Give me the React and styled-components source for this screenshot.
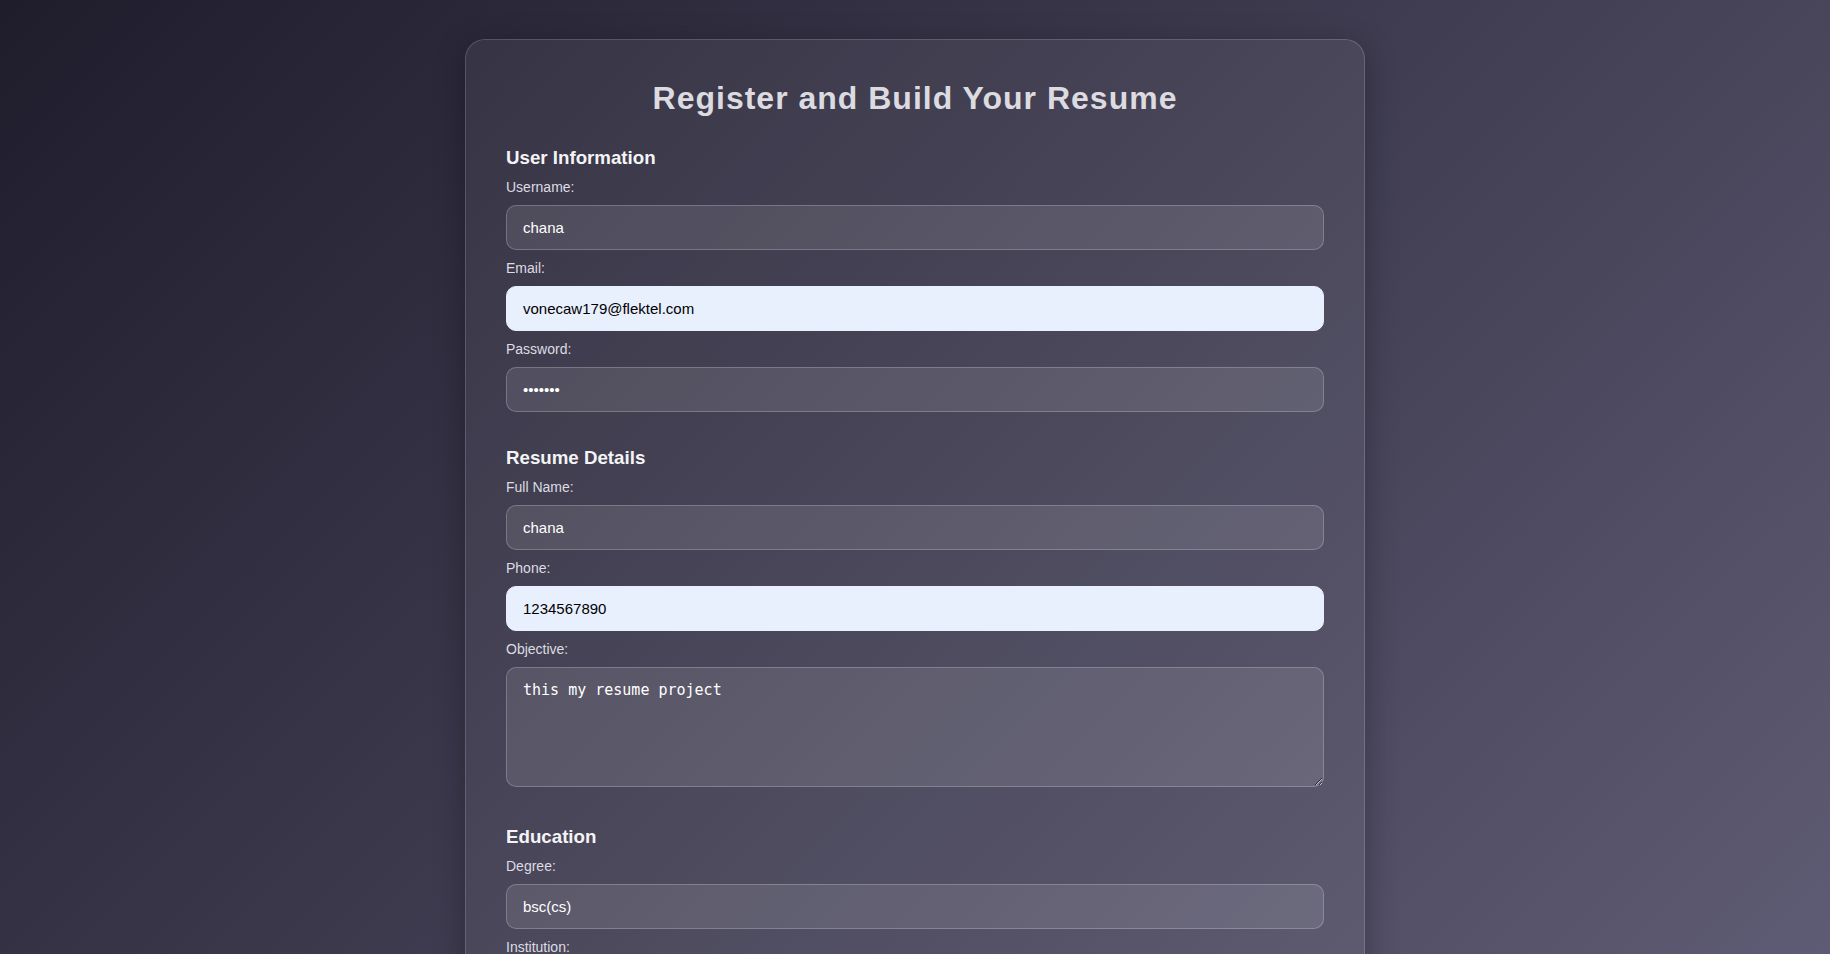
import React, { useState } from 'react'
import styled, { createGlobalStyle } from 'styled-components'

const GlobalStyle = createGlobalStyle`
  * {
    box-sizing: border-box;
  }
  body {
    margin: 0;
    font-family: 'Liberation Sans', Arial, sans-serif;
  }
`

const Page = styled.div`
  min-height: 100vh;
  padding: 39px 0 60px;
  background: linear-gradient(135deg, #1f1c2c 0%, #5e5b74 100%);
  background-attachment: fixed;
`

const Card = styled.form`
  width: 900px;
  margin: 0 auto;
  padding: 40px;
  border-radius: 20px;
  border: 1px solid rgba(255, 255, 255, 0.16);
  background: rgba(255, 255, 255, 0.06);
  box-shadow: 0 8px 32px rgba(0, 0, 0, 0.3);
  color: #f2f2f4;
`

const Title = styled.h1`
  margin: 0 0 30px;
  font-size: 32px;
  font-weight: 700;
  letter-spacing: 1px;
  text-align: center;
  color: #dcdbe0;
`

// padding rather than margin so the last field's margin doesn't collapse into it
const Section = styled.section`
  padding-bottom: 25px;
`

const SectionTitle = styled.h3`
  margin: 0 0 10px;
  font-size: 18.72px;
  font-weight: 700;
  color: #f4f4f6;
`

const Label = styled.label`
  display: block;
  margin-bottom: 10px;
  font-size: 14px;
  color: #dddce2;
`

const Input = styled.input`
  display: block;
  width: 100%;
  height: 45px;
  margin: 0 0 10px;
  padding: 0 16px;
  border-radius: 10px;
  border: 1px solid ${(p) => (p.$filled ? '#e8f0fe' : 'rgba(255, 255, 255, 0.22)')};
  background: ${(p) => (p.$filled ? '#e8f0fe' : 'rgba(255, 255, 255, 0.1)')};
  color: ${(p) => (p.$filled ? '#000' : '#fff')};
  font-family: 'Liberation Sans', Arial, sans-serif;
  font-size: 15px;
  outline: none;
`

const TextArea = styled.textarea`
  display: block;
  width: 100%;
  height: 120px;
  margin: 0 0 14px;
  padding: 13px 16px;
  border-radius: 10px;
  border: 1px solid rgba(255, 255, 255, 0.22);
  background: rgba(255, 255, 255, 0.1);
  color: #fff;
  font-family: 'DejaVu Sans Mono', monospace;
  font-size: 15px;
  outline: none;
`

const SubmitButton = styled.button`
  display: block;
  width: 100%;
  height: 48px;
  border: none;
  border-radius: 10px;
  background: #6c63ff;
  color: #fff;
  font-family: 'Liberation Sans', Arial, sans-serif;
  font-size: 16px;
  font-weight: 700;
  cursor: pointer;
`

const sections = [
  {
    title: 'User Information',
    fields: [
      { name: 'username', label: 'Username:', value: 'chana' },
      { name: 'email', label: 'Email:', value: 'vonecaw179@flektel.com', type: 'email', filled: true },
      { name: 'password', label: 'Password:', value: '1234567', type: 'password' },
    ],
  },
  {
    title: 'Resume Details',
    fields: [
      { name: 'fullName', label: 'Full Name:', value: 'chana' },
      { name: 'phone', label: 'Phone:', value: '1234567890', type: 'tel', filled: true },
      { name: 'objective', label: 'Objective:', value: 'this my resume project', multiline: true },
    ],
  },
  {
    title: 'Education',
    fields: [
      { name: 'degree', label: 'Degree:', value: 'bsc(cs)' },
      { name: 'institution', label: 'Institution:', value: '' },
      { name: 'year', label: 'Year:', value: '' },
    ],
  },
  {
    title: 'Skills',
    fields: [{ name: 'skills', label: 'Skills (comma separated):', value: '' }],
  },
]

export default function App() {
  const [values, setValues] = useState(() => {
    const init = {}
    sections.forEach((s) => s.fields.forEach((f) => (init[f.name] = f.value)))
    return init
  })

  const update = (e) => setValues({ ...values, [e.target.name]: e.target.value })

  return (
    <>
      <GlobalStyle />
      <Page>
        <Card onSubmit={(e) => e.preventDefault()}>
          <Title>Register and Build Your Resume</Title>
          {sections.map((section) => (
            <Section key={section.title}>
              <SectionTitle>{section.title}</SectionTitle>
              {section.fields.map((field) => (
                <React.Fragment key={field.name}>
                  <Label htmlFor={field.name}>{field.label}</Label>
                  {field.multiline ? (
                    <TextArea id={field.name} name={field.name} value={values[field.name]} onChange={update} />
                  ) : (
                    <Input
                      id={field.name}
                      name={field.name}
                      type={field.type || 'text'}
                      value={values[field.name]}
                      onChange={update}
                      $filled={field.filled}
                    />
                  )}
                </React.Fragment>
              ))}
            </Section>
          ))}
          <SubmitButton type="submit">Register</SubmitButton>
        </Card>
      </Page>
    </>
  )
}
